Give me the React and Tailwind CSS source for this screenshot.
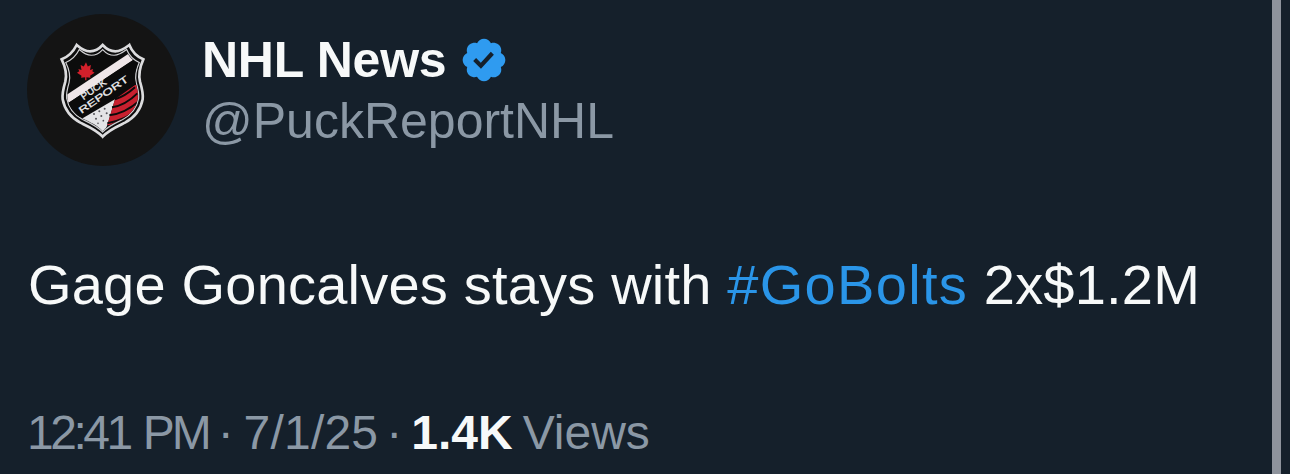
import React from 'react';

const sans = "font-['Liberation_Sans',Arial,sans-serif]";

const shieldPath =
  'M125 148 C145 140 160 125 170 105 C185 118 198 124 210 124 C224 124 238 116 248 105 C258 116 272 124 286 124 C298 124 311 118 328 105 C336 125 351 140 370 148 C360 170 354 190 360 215 C366 235 370 250 368 268 C362 300 345 322 315 338 C290 350 266 360 248 380 C230 360 206 350 181 338 C151 322 134 300 128 268 C126 250 130 235 136 215 C142 190 136 170 125 148 Z';

// clip so the sash, dots and stripes stay inside the inner shield
const PuckReportLogo = () => (
  <svg viewBox="21 12 456 456" className="w-[152px] h-[152px] shrink-0">
    <defs>
      <clipPath id="inner">
        <path d={shieldPath} transform="translate(248 242) scale(0.88) translate(-248 -242)" />
      </clipPath>
    </defs>
    <circle cx="249" cy="240" r="228" fill="#141414" />
    <path d={shieldPath} fill="#0c0c0c" stroke="#dcdcde" strokeWidth="8" />
    <path
      d={shieldPath}
      transform="translate(248 242) scale(0.9) translate(-248 -242)"
      fill="#0c0c0c"
      stroke="#d0d0d3"
      strokeWidth="4"
    />
    <g clipPath="url(#inner)">
      {/* lower right: white corner and red panel */}
      <polygon points="170,335 285,268 262,345 248,380 170,350" fill="#e4e4e6" />
      <polygon points="262,345 285,268 345,225 380,225 380,300 320,350" fill="#c8202f" />
      <path
        d="M285 268 C305 262 325 250 345 232 M276 292 C300 288 330 272 352 250 M268 316 C298 312 332 296 358 272 M262 340 C295 334 330 318 358 298"
        stroke="#0b0b0b"
        strokeWidth="6"
        fill="none"
      />
      {/* dots */}
      <g fill="#55555a">
        <circle cx="222" cy="312" r="3" />
        <circle cx="238" cy="304" r="3" />
        <circle cx="254" cy="296" r="3" />
        <circle cx="228" cy="326" r="3" />
        <circle cx="244" cy="318" r="3" />
        <circle cx="260" cy="310" r="3" />
        <circle cx="234" cy="340" r="2.5" />
        <circle cx="250" cy="332" r="2.5" />
      </g>
      {/* diagonal sash */}
      <polygon points="120,268 330,128 345,146 125,292" fill="#efe6e8" />
      <polygon points="125,292 345,146 360,216 150,338" fill="#0b0b0b" />
    </g>
    <path
      transform="translate(198 184) scale(1.35) translate(-196 -180)"
      d="M196 160 l4 9 7 -3 -2 11 7 -2 -2 5 5 3 -10 7 1 4 -9 -1 0 7 -3 0 0 -7 -9 1 1 -4 -10 -7 5 -3 -2 -5 7 2 -2 -11 7 3z"
      fill="#d3202b"
    />
    <g
      fill="#ececee"
      stroke="#ececee"
      strokeWidth="0.8"
      fontFamily="'Liberation Sans', Arial, sans-serif"
      textAnchor="middle"
    >
      <text transform="rotate(-35 226 246)" x="226" y="246" fontSize="28" textLength="87" lengthAdjust="spacingAndGlyphs">
        PUCK
      </text>
      <text transform="rotate(-35 256 262)" x="256" y="262" fontSize="28" textLength="175" lengthAdjust="spacingAndGlyphs">
        REPORT
      </text>
    </g>
  </svg>
);

const VerifiedBadge = () => (
  <svg viewBox="0 0 22 22" className="w-[50px] h-[50px] ml-[13px] shrink-0">
    <path
      fill="#2f9bf0"
      d="M20.396 11c-.018-.646-.215-1.275-.57-1.816-.354-.54-.852-.972-1.438-1.246.223-.607.27-1.264.14-1.897-.131-.634-.437-1.218-.882-1.687-.47-.445-1.053-.75-1.687-.882-.633-.13-1.29-.083-1.897.14-.273-.587-.704-1.086-1.245-1.44S11.647 1.62 11 1.604c-.646.017-1.273.213-1.813.568s-.969.854-1.24 1.44c-.608-.223-1.267-.272-1.902-.14-.635.13-1.22.436-1.69.882-.445.47-.749 1.055-.878 1.688-.13.633-.08 1.29.144 1.896-.587.274-1.087.705-1.443 1.245-.356.54-.555 1.17-.574 1.817.02.647.218 1.276.574 1.817.356.54.856.972 1.443 1.245-.224.606-.274 1.263-.144 1.896.13.634.433 1.218.877 1.688.47.443 1.054.747 1.687.878.633.132 1.29.084 1.897-.136.274.586.705 1.084 1.246 1.439.54.354 1.17.551 1.816.569.647-.016 1.276-.213 1.817-.567s.972-.854 1.245-1.44c.604.239 1.266.296 1.903.164.636-.132 1.22-.447 1.68-.907.46-.46.776-1.044.908-1.681s.075-1.299-.165-1.903c.586-.274 1.084-.705 1.439-1.246.354-.54.551-1.17.569-1.816z"
    />
    <path
      fill="#15202b"
      d="M9.662 14.85l-3.429-3.428 1.293-1.302 2.072 2.072 4.4-4.794 1.347 1.246z"
    />
  </svg>
);

export default function App() {
  return (
    <div className={`w-[1290px] h-[474px] overflow-hidden flex bg-[#15202b] ${sans}`}>
      <div className="flex-1 flex flex-col pl-[27px] pt-[14px]">
        <div className="flex items-start gap-[23px]">
          <PuckReportLogo />
          <div className="flex flex-col pt-[16px]">
            <div className="flex items-center h-[60px]">
              <span className="text-[50px] leading-[60px] font-bold text-[#f7f9f9] tracking-[-0.25px]">
                NHL News
              </span>
              <VerifiedBadge />
            </div>
            <div className="text-[50px] leading-[62px] text-[#8b98a5]">@PuckReportNHL</div>
          </div>
        </div>
        <p className="mt-[87px] ml-px text-[56px] leading-[64px] text-[#f7f9f9] whitespace-nowrap tracking-[0.2px]">
          Gage Goncalves stays with{' '}
          <span className="text-[#2a95e8] tracking-[1.3px]">#GoBolts</span> 2x$1.2M
        </p>
        <div className="mt-[86px] flex items-baseline text-[48px] leading-[60px] text-[#8b98a5] whitespace-nowrap">
          <span className="tracking-[-3.5px]">12:41</span>
          <span className="ml-[13px] tracking-[-3px]">PM</span>
          <span className="ml-[9px]">·</span>
          <span className="ml-[10px] tracking-[0.2px]">7/1/25</span>
          <span className="ml-[8px]">·</span>
          <span className="ml-[9px] font-bold text-[#f7f9f9]">1.4K</span>
          <span className="ml-[10px]">Views</span>
        </div>
      </div>
      <div className="w-[9px] mr-[9px] bg-[#8e939c] shrink-0" />
    </div>
  );
}
